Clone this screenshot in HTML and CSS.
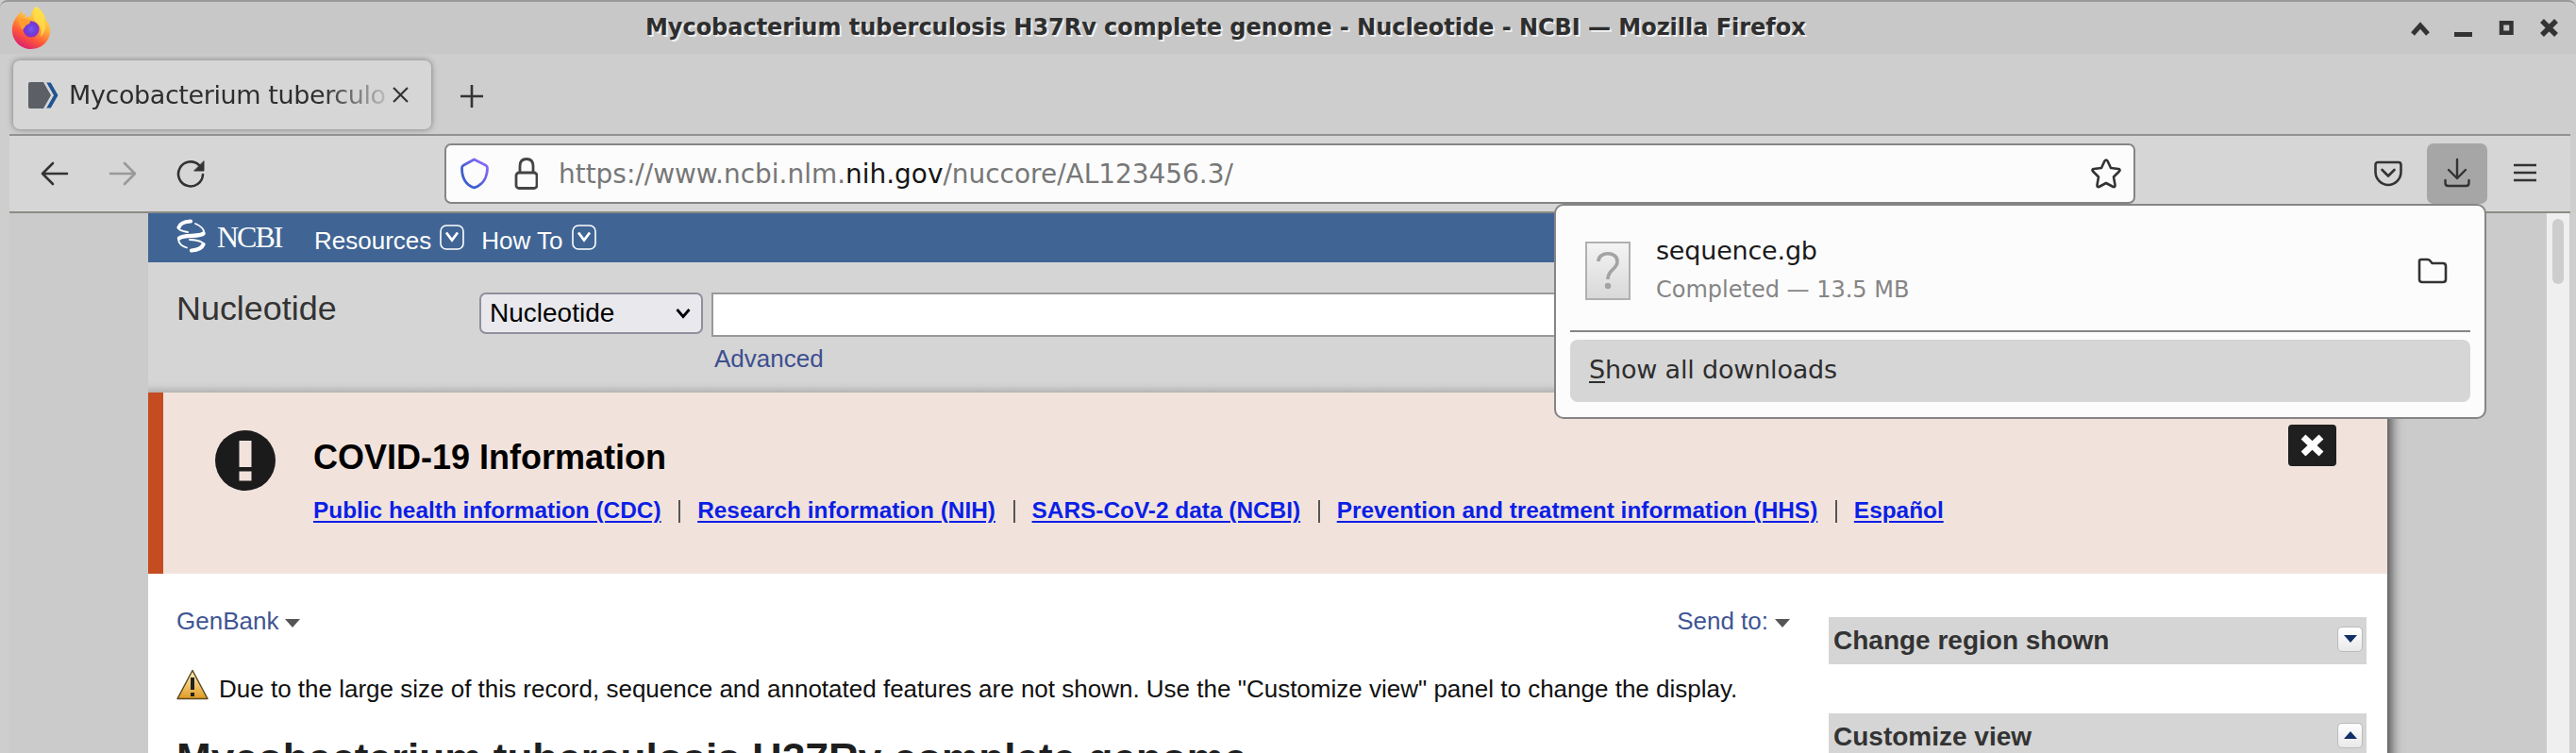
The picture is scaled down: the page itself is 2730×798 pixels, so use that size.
FILE: index.html
```html
<!DOCTYPE html>
<html lang="en"><head><meta charset="utf-8"><title>Mycobacterium tuberculosis H37Rv complete genome</title>
<link rel="stylesheet" href="styles.css"></head>
<body>
<div class="window">
<header class="titlebar">
  <svg class="firefox" viewBox="0 0 42 48"><defs>
    <linearGradient id="fx" x1=".8" y1="0" x2=".3" y2="1"><stop offset="0" stop-color="#fff44f"/><stop offset=".4" stop-color="#ffb13b"/><stop offset=".7" stop-color="#ff5a36"/><stop offset="1" stop-color="#dc1c72"/></linearGradient>
    <radialGradient id="gl"><stop offset="0" stop-color="#7a58f0"/><stop offset=".6" stop-color="#6b3fd8"/><stop offset="1" stop-color="#8a2fc8"/></radialGradient></defs>
    <path fill="url(#fx)" d="M27 1c7 5 10 11 10 15 3 3 5 7 5 12 0 12-10 20-21 20S0 39 0 27c0-7 3-13 7-17 1-1 2-3 2-4 2 1 3 3 3 5l3-2v4c2-1 4-1 6-1C21 8 23 3 27 1z"/>
    <circle cx="21" cy="26" r="9" fill="url(#gl)"/>
    <path fill="#ff9c2e" d="M7 16c5-2 9-2 13 2 0 2-3 3-5 4-1 3-3 3-3 5-3-3-5-7-5-11z"/>
    <path fill="#ffdf4a" opacity=".8" d="M27 2c7 6 9 11 9 17 2 7-1 12-5 16 3-9 0-14-5-17-4-5-2-12 1-16z"/></svg>
  <div class="title"><span>Mycobacterium tuberculosis H37Rv complete genome - Nucleotide - NCBI — Mozilla Firefox</span></div>
  <svg class="winbtns" viewBox="0 0 160 24" fill="none" stroke="#333" stroke-width="5"><path d="M5 17l8-9 8 9"/><path d="M49 17.500h19"/><path stroke-width="4.500" d="M99 5.200h10.500v10.500H99z"/><path stroke-width="5.500" d="M142 3l15 15M157 3l-15 15"/></svg>
</header>
<div class="tabs">
  <div class="tab">
    <svg class="favicon" viewBox="0 0 32 28"><path fill="#5c6066" d="M2 0h14l8 14-8 14H2q-2 0-2-2V2q0-2 2-2z"/><path fill="#205493" stroke="#d6d6d6" stroke-width="1" d="M18.500 0h5.500l8 14-8 14h-5.500l8-14z"/></svg>
    <span class="tabtext">Mycobacterium tuberculo</span>
    <svg class="tabclose" viewBox="0 0 16 16"><path d="M1 1l14 14M15 1L1 15" stroke="#333" stroke-width="2"/></svg>
  </div>
  <svg class="plus" viewBox="0 0 24 24"><path d="M12 0v24M0 12h24" stroke="#333" stroke-width="2.600"/></svg>
</div>
<nav class="toolbar">
  <svg class="arrows" viewBox="0 0 174 32" fill="none" stroke="#333" stroke-width="2.600" stroke-linecap="round" stroke-linejoin="round"><path d="M28 16H2M13 5L2 16l11 11"/><path stroke="#999" d="M74 16h26M89 5l11 11-11 11"/><path d="M172 17a13 13 0 1 1-4-10"/><path fill="#333" stroke-width="1" d="M173 3v10h-10z"/></svg>
  <div class="urlbar">
    <svg class="shield" viewBox="0 0 82 34" fill="none" stroke-width="2.800" stroke-linejoin="round"><defs><linearGradient id="sh" x1="0" y1="1" x2="1" y2="0"><stop offset=".3" stop-color="#3f5fd0"/><stop offset="1" stop-color="#9a6bff"/></linearGradient></defs><path stroke="url(#sh)" d="M14.500 2l12 6q2 1 2 3c0 10-5 18-14 21-9-3-13-11-13-21q0-2 2-3z"/><rect x="59" y="16" width="22" height="16.500" rx="3" stroke="#444"/><path stroke="#444" d="M63 16V9q0-7.500 7-7.500T77 9v7"/></svg>
    <span class="url">https://www.ncbi.nlm.<b>nih.gov</b>/nuccore/AL123456.3/</span>
    <svg class="star" viewBox="0 0 32 32" fill="none" stroke="#333" stroke-width="2.600" stroke-linejoin="round"><path d="M14.500 2.500q1.500-2 3 0L21 10l8 1q2.500.5 1 2.500l-6 6 1.500 8.500q.2 2.500-2 2L16 26l-7.500 4q-2.200.5-2-2L8 19.500l-6-6Q.5 11.500 3 11l8-1z"/></svg>
  </div>
  <svg class="pocket" viewBox="0 0 30 28" fill="none" stroke="#333" stroke-width="2.600" stroke-linecap="round" stroke-linejoin="round"><path d="M4 2h22q2.500 0 2.500 3v7a13.500 14 0 0 1-27 0V5Q1.500 2 4 2z"/><path d="M8.500 10l6.500 6.500 6.500-6.500"/></svg>
  <div class="dlbtn"><svg viewBox="0 0 28 32" fill="none" stroke="#333" stroke-width="2.400" stroke-linecap="round" stroke-linejoin="round"><path d="M14 2v20M5 13l9 9 9-9M1.500 24v3q0 3 3 3h19q3 0 3-3v-3"/></svg></div>
  <svg class="menu" viewBox="0 0 24 20" stroke="#333" stroke-width="2.400"><path d="M0 2h24M0 10h24M0 18h24"/></svg>
</nav>
<div class="viewport">
 <div class="page">
  <div class="ncbibar">
   <svg class="helix" viewBox="0 0 31 36" fill="none" stroke="#fff" stroke-linecap="round"><path stroke-width="4.200" d="M15 2.500C8 3 3.500 5.500 2.500 9M3 20.500C7 16 25 19.500 28.500 15.500M28.500 27C27 31 22 33 16 33.500"/><path stroke-width="1.800" d="M2 9c0 3 4 4 10 5M29.500 15C29 10.500 25 7 20 5M14 22c10 .5 14 2 15 5M2 21c0 5 4 8 9 9.500"/></svg>
   <span class="logo">NCBI</span>
   <span class="nav1">Resources</span><svg class="drop d1" viewBox="0 0 26 27"><rect x="1" y="1" width="24" height="25" rx="6"/><path d="M7 8.500l6 8 6-8"/></svg>
   <span class="nav2">How To</span><svg class="drop" viewBox="0 0 26 27"><rect x="1" y="1" width="24" height="25" rx="6"/><path d="M7 8.500l6 8 6-8"/></svg>
  </div>
  <div class="search">
   <div class="db">Nucleotide</div>
   <div class="select"><span>Nucleotide</span><svg viewBox="0 0 16 12"><path d="M1.500 2L8 9.500 14.500 2" fill="none" stroke="#000" stroke-width="2.800"/></svg></div>
   <div class="field"><div class="input"></div><a class="adv">Advanced</a></div>
  </div>
  <section class="covid">
   <svg class="excl" viewBox="0 0 64 64"><circle cx="32" cy="32" r="32" fill="#1b1b1b"/><path fill="#f1e3dc" d="M25.500 11h13v28h-13zM25.500 43.500h13v10h-13z"/></svg>
   <div class="covidbody"><h2>COVID-19 Information</h2>
    <ul><li><a>Public health information (CDC)</a></li><li><a>Research information (NIH)</a></li><li><a>SARS-CoV-2 data (NCBI)</a></li><li><a>Prevention and treatment information (HHS)</a></li><li><a>Español</a></li></ul></div>
   <div class="dismiss"><svg viewBox="0 0 26 26"><path d="M3 4l19 18M22 4L3 22" stroke="#fff" stroke-width="7"/></svg></div>
  </section>
  <main class="record">
   <div class="left">
    <div class="row"><span class="link">GenBank<i></i></span><span class="link">Send to:<i></i></span></div>
    <div class="warn"><svg viewBox="0 0 34 33"><defs><linearGradient id="w" x1="0" y1="0" x2="0" y2="1"><stop offset="0" stop-color="#fff3c0"/><stop offset="1" stop-color="#e09a20"/></linearGradient></defs><path fill="url(#w)" stroke="#5c4a22" stroke-width="1.500" stroke-linejoin="round" d="M17 1.500L33 31.500H1z"/><path stroke="#222" stroke-width="4" d="M17 9v13M17 25v4"/></svg><span>Due to the large size of this record, sequence and annotated features are not shown. Use the "Customize view" panel to change the display.</span></div>
    <h1>Mycobacterium tuberculosis H37Rv complete genome</h1>
   </div>
   <aside class="side"><div class="box"><span>Change region shown</span><em><svg viewBox="0 0 14 8"><path d="M0 0h14L7 8z"/></svg></em></div><div class="box"><span>Customize view</span><em><svg viewBox="0 0 14 8"><path d="M0 8h14L7 0z"/></svg></em></div></aside>
  </main>
 </div>
 <div class="scroll"><div class="thumb"></div></div>
</div>
<div class="popup">
 <div class="item">
  <svg class="file" viewBox="0 0 48 62"><defs><linearGradient id="f" x1="0" y1="0" x2="0" y2="1"><stop offset="0" stop-color="#f4f4f4"/><stop offset="1" stop-color="#d8d8d8"/></linearGradient></defs><rect x="1" y="1" width="46" height="60" fill="url(#f)" stroke="#b0b0b0" stroke-width="2"/><path d="M14 21c0-11 20-11 20 0 0 9-10 8-10 19" fill="none" stroke="#a3a3a3" stroke-width="3.600"/><circle cx="24" cy="47" r="3.200" fill="#a3a3a3"/></svg>
  <div class="meta"><div class="fname">sequence.gb</div><div class="fstat">Completed — 13.5 MB</div></div>
  <svg class="folder" viewBox="0 0 32 28" fill="none" stroke="#333" stroke-width="2.600" stroke-linejoin="round"><path d="M4 2h6.500q2 0 3 1.500L15.500 6H27q3 0 3 3v14q0 3-3 3H5q-3 0-3-3V4q0-2 2-2z"/></svg>
 </div>
 <div class="all"><span><u>S</u>how all downloads</span></div>
</div>
</div>
</body></html>
```
FILE: styles.css
```css
* { box-sizing: border-box; margin: 0; padding: 0; }
body { width: 2730px; height: 798px; overflow: hidden; font-family: "DejaVu Sans", sans-serif; color: #2e2e2e; background: #cecece; }
svg { display: block; flex: none; }
span, a { white-space: nowrap; }
.window { position: relative; height: 798px; display: flex; flex-direction: column; overflow: hidden; }
.titlebar { height: 57px; flex: none; display: flex; align-items: flex-start; background: #c8c8c8; border-top: 2px solid #999; padding-left: 12px; border-radius: 8px 8px 0 0; }
.firefox { width: 42px; height: 46px; margin-top: 4px; }
.title { margin-left: 630px; width: 1864px; font: bold 24px/32px "DejaVu Sans", sans-serif; letter-spacing: -.03px; padding-top: 11px; text-shadow: 2px 2px 0 #eee; }
.winbtns { width: 160px; height: 24px; margin-top: 17px; margin-left: 4px; }
.tabs { height: 85px; flex: none; display: flex; padding: 7px 0 0 14px; background: #cecece; }
.tab { width: 443px; height: 73px; flex: none; border-radius: 7px; background: #d6d6d6; box-shadow: 0 0 6px #777; display: flex; align-items: center; padding-left: 16px; }
.favicon { width: 32px; height: 28px; }
.tabtext { margin-left: 11px; width: 341px; font-size: 27px; letter-spacing: -.4px; line-height: 40px; -webkit-mask-image: linear-gradient(90deg, #000 79%, transparent 102%); mask-image: linear-gradient(90deg, #000 79%, transparent 102%); }
.tabclose { width: 17px; height: 17px; margin-left: 2px; }
.plus { width: 24px; height: 24px; margin: 26px 0 0 31px; }
.toolbar { height: 84px; flex: none; margin: 0 6px 0 10px; display: flex; align-items: center; background: #d6d6d6; border-top: 2px solid #929292; border-bottom: 2px solid #8c8c84; }
.arrows { width: 174px; height: 32px; margin-left: 33px; }
.urlbar { width: 1792px; height: 64px; flex: none; margin-left: 254px; border: 2px solid #858585; border-radius: 7px; background: #fcfcfc; display: flex; align-items: center; }
.shield { width: 82px; height: 34px; margin-left: 15px; }
.url { margin-left: 22px; width: 1623px; font-size: 27.950px; color: #777; }
.url b { font-weight: normal; color: #151515; }
.star { width: 32px; height: 32px; margin-left: 1px; }
.pocket { width: 30px; height: 28px; margin-left: 253px; }
.dlbtn { width: 64px; height: 64px; margin-left: 26px; border-radius: 7px; background: #a6a6a6; display: flex; align-items: center; justify-content: center; flex: none; }
.dlbtn svg { width: 28px; height: 32px; margin-bottom: 2px; }
.menu { width: 24px; height: 20px; margin-left: 28px; margin-bottom: 2px; }
.viewport { flex: 1; display: flex; margin: 0 7px 0 10px; padding-left: 147px; background: #cbcbcb; font-family: "Liberation Sans", Arial, sans-serif; }
.page { width: 2373px; flex: none; background: #fff; box-shadow: 4px 4px 12px #444; clip-path: inset(0 -20px 0 0); }
.ncbibar { height: 52px; background: #406595; color: #fff; display: flex; align-items: flex-start; font-size: 26px; line-height: 30px; }
.helix { width: 31px; height: 36px; margin: 6px 0 0 30px; }
.logo { font: 32px/36px "Liberation Serif", serif; margin: 7px 0 0 12px; width: 103px; letter-spacing: -2px; }
.nav1, .nav2 { padding-top: 14px; }
.drop { width: 26px; height: 27px; margin: 12px 0 0 9px; fill: none; stroke: #fff; stroke-width: 1.600; }
.drop path { stroke-width: 2.800; }
.nav2 { margin-left: 18px; }
.search { height: 138px; display: flex; background: linear-gradient(#d5d5d5 126px, #cfcfcf 131px, #b4b4b4 138px); }
.db { width: 351px; padding: 27px 0 0 30px; font-size: 35.900px; line-height: 44px; color: #333; }
.select { width: 237px; height: 44px; margin-top: 32px; border: 2px solid #8f8f9d; border-radius: 7px; background: #e9e9ed; display: flex; align-items: center; justify-content: space-between; padding: 0 11px 0 9px; font-size: 28px; color: #000; }
.select svg { width: 16px; height: 12px; }
.field { margin: 32px 0 0 9px; flex: 1; }
.input { height: 47px; background: #fff; border: 2px solid #999; }
.adv { display: block; margin: 8px 0 0 3px; font-size: 26px; line-height: 30px; color: #3c4f8f; }
.covid { height: 192px; background: #f1e3dc; border-left: 16px solid #c54b20; display: flex; }
.excl { width: 64px; height: 64px; margin: 40px 0 0 55px; }
.covidbody { margin-left: 40px; flex: 1; color: #000; }
.covidbody h2 { font-size: 36px; line-height: 42px; margin-top: 48px; }
.covidbody ul { list-style: none; display: flex; margin-top: 20px; font-weight: bold; font-size: 24.400px; line-height: 30px; }
.covidbody li { display: flex; align-items: center; }
.covidbody li + li::before { content: ""; width: 2px; height: 24px; margin: 2px 18px 0 18.600px; background: #555; }
.covidbody a { color: #0b1fe6; text-decoration: underline; text-decoration-thickness: 2px; text-underline-offset: 3px; }
.dismiss { width: 51px; height: 44px; margin: 34px 54px 0 0; border-radius: 4px; background: #1f1f1f; display: flex; align-items: center; justify-content: center; }
.dismiss svg { width: 26px; height: 26px; }
.record { display: flex; justify-content: space-between; }
.left { width: 1740px; padding: 35px 0 0 30px; }
.row { display: flex; justify-content: space-between; font-size: 26px; line-height: 30px; color: #3f5593; }
.link { display: flex; align-items: center; }
.link i { border: 8px solid transparent; border-top: 9px solid #555; border-bottom: 0; margin: 4px 0 0 7px; }
.warn { display: flex; margin-top: 37px; font-size: 26px; line-height: 30px; color: #111; }
.warn svg { width: 34px; height: 33px; margin: -1px 11px 0 0; }
.warn span { padding-top: 5px; }
h1 { font-size: 44.100px; line-height: 52px; margin-top: 33px; color: #1e1e1e; white-space: nowrap; }
.side { width: 570px; margin: 46px 22px 0 0; display: grid; gap: 52px; align-content: start; }
.box { height: 50px; background: #d5d5d5; display: flex; justify-content: space-between; align-items: center; padding: 0 4px 0 5px; font-weight: bold; font-size: 28px; color: #333; }
.box em { width: 27px; height: 27px; margin-bottom: 4px; border: 1px solid #bbb; border-radius: 5px; background: linear-gradient(#fff, #e9e9e9); display: flex; align-items: center; justify-content: center; }
.box em svg { width: 14px; height: 8px; fill: #123067; }
.scroll { width: 24px; margin-left: 169px; background: #efefef; padding: 6px; }
.thumb { width: 12px; height: 69px; border-radius: 6px; background: #cdcdcd; }
.popup { position: absolute; left: 1647px; top: 216px; width: 988px; height: 228px; border: 2px solid #858585; border-radius: 10px; background: #fcfcfc; }
.item { height: 134px; margin: 0 15px; border-bottom: 2px solid #858585; display: flex; padding: 38px 24px 0 16px; }
.file { width: 48px; height: 62px; }
.meta { margin-left: 27px; flex: 1; }
.fname { font-size: 27px; line-height: 34px; margin-top: -7px; color: #1a1a1a; letter-spacing: -.2px; }
.fstat { font-size: 24px; line-height: 30px; margin-top: 9px; color: #858585; }
.folder { width: 32px; height: 28px; margin-top: 17px; }
.all { height: 66px; margin: 8px 15px 0; border-radius: 8px; background: #d6d6d6; display: flex; align-items: center; padding: 0 20px 3px; font-size: 27px; letter-spacing: -.18px; }
.all u { text-decoration-thickness: 2px; text-underline-offset: 3px; }
```
